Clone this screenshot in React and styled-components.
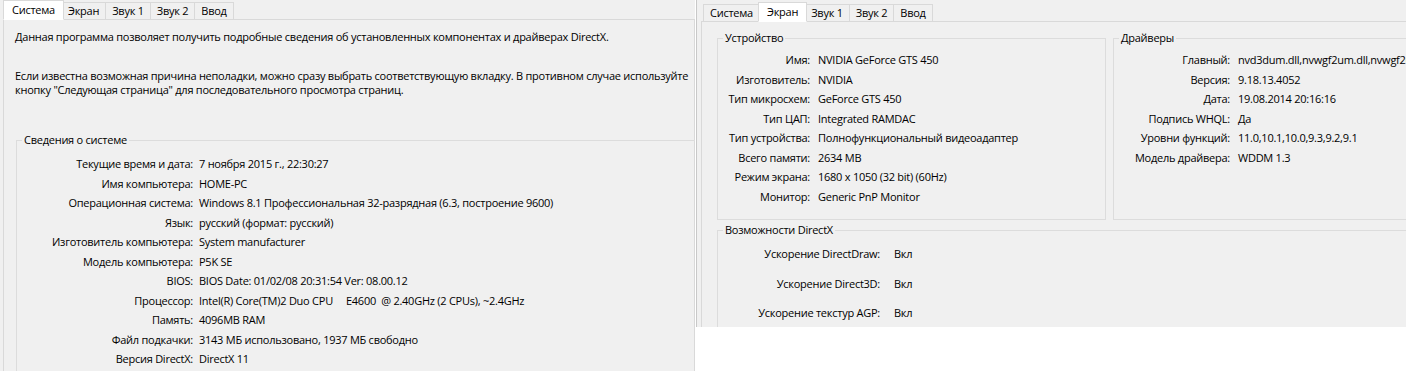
import React from "react";
import styled, { createGlobalStyle } from "styled-components";

const GlobalStyle = createGlobalStyle`
  html, body {
    margin: 0;
    padding: 0;
    background: #ffffff;
  }
  body {
    font-family: "Open Sans", "Noto Sans", sans-serif;
    font-size: 11px;
    letter-spacing: -0.25px;
    color: #000;
  }
`;

const systemRows = [
  ["Текущие время и дата", "7 ноября 2015 г., 22:30:27"],
  ["Имя компьютера", "HOME-PC"],
  ["Операционная система", "Windows 8.1 Профессиональная 32-разрядная (6.3, построение 9600)"],
  ["Язык", "русский (формат: русский)"],
  ["Изготовитель компьютера", "System manufacturer"],
  ["Модель компьютера", "P5K SE"],
  ["BIOS", "BIOS Date: 01/02/08 20:31:54 Ver: 08.00.12"],
  ["Процессор", "Intel(R) Core(TM)2 Duo CPU     E4600  @ 2.40GHz (2 CPUs), ~2.4GHz"],
  ["Память", "4096MB RAM"],
  ["Файл подкачки", "3143 МБ использовано, 1937 МБ свободно"],
  ["Версия DirectX", "DirectX 11"],
];

const deviceRows = [
  ["Имя", "NVIDIA GeForce GTS 450"],
  ["Изготовитель", "NVIDIA"],
  ["Тип микросхем", "GeForce GTS 450"],
  ["Тип ЦАП", "Integrated RAMDAC"],
  ["Тип устройства", "Полнофункциональный видеоадаптер"],
  ["Всего памяти", "2634 MB"],
  ["Режим экрана", "1680 x 1050 (32 bit) (60Hz)"],
  ["Монитор", "Generic PnP Monitor"],
];

const driverRows = [
  ["Главный", "nvd3dum.dll,nvwgf2um.dll,nvwgf2um.dll"],
  ["Версия", "9.18.13.4052"],
  ["Дата", "19.08.2014 20:16:16"],
  ["Подпись WHQL", "Да"],
  ["Уровни функций", "11.0,10.1,10.0,9.3,9.2,9.1"],
  ["Модель драйвера", "WDDM 1.3"],
];

const featureRows = [
  ["Ускорение DirectDraw", "Вкл"],
  ["Ускорение Direct3D", "Вкл"],
  ["Ускорение текстур AGP", "Вкл"],
];

const tabs = ["Система", "Экран", "Звук 1", "Звук 2", "Ввод"];

function TabBar({ active, height, inset }) {
  return (
    <TabStrip $h={height} $inset={inset}>
      {tabs.map((t) => (
        <Tab key={t} $active={t === active}>
          {t}
        </Tab>
      ))}
    </TabStrip>
  );
}

function InfoGrid({ rows, labelWidth, pitch, gap, top }) {
  return (
    <Grid $labelWidth={labelWidth} $pitch={pitch} $gap={gap} $top={top}>
      {rows.map(([k, v]) => (
        <React.Fragment key={k}>
          <Label>{k}:</Label>
          <Value>{v}</Value>
        </React.Fragment>
      ))}
    </Grid>
  );
}

export default function App() {
  return (
    <>
      <GlobalStyle />
      <Screen>
        <Dialog $w={695} $h={371}>
          <TabBar active="Система" height={20} inset={2} />
          <Page>
            <Intro>
              Данная программа позволяет получить подробные сведения об установленных компонентах и драйверах DirectX.
            </Intro>
            <Intro $top={25}>
              Если известна возможная причина неполадки, можно сразу выбрать соответствующую вкладку. В противном случае используйте
              <br />
              кнопку "Следующая страница" для последовательного просмотра страниц.
            </Intro>
            <Group $left={12} $top={36} $width={720} $height={280}>
              <Legend>Сведения о системе</Legend>
              <InfoGrid rows={systemRows} labelWidth={176} pitch={19.5} gap={6} top={3} />
            </Group>
          </Page>
        </Dialog>

        <Dialog $w={711} $h={327} $frame>
          <TabBar active="Экран" height={22} inset={3} />
          <Page>
            <GroupRow>
              <Group $left={15} $top={9} $width={389} $height={189}>
                <Legend>Устройство</Legend>
                <InfoGrid rows={deviceRows} labelWidth={92} pitch={19.5} gap={8} top={1} />
              </Group>
              <Group $left={7} $top={9} $width={320} $height={189}>
                <Legend>Драйверы</Legend>
                <InfoGrid rows={driverRows} labelWidth={116} pitch={19.5} gap={8} top={1} />
              </Group>
            </GroupRow>
            <Group $left={15} $top={3} $width={720} $height={160}>
              <Legend>Возможности DirectX</Legend>
              <InfoGrid rows={featureRows} labelWidth={162} pitch={29.5} gap={14} top={-2} />
            </Group>
          </Page>
        </Dialog>
      </Screen>
    </>
  );
}

const Screen = styled.div`
  display: flex;
  align-items: flex-start;
  width: 1406px;
  height: 371px;
  overflow: hidden;
`;

const Dialog = styled.div`
  flex: none;
  box-sizing: border-box;
  width: ${(p) => p.$w}px;
  height: ${(p) => p.$h}px;
  background: #f0f0f0;
  display: flex;
  flex-direction: column;
  padding-left: ${(p) => (p.$frame ? 4 : 3)}px;
  border-left: ${(p) => (p.$frame ? "1px solid #c8c8c8" : "none")};
  margin-left: ${(p) => (p.$frame ? 1 : 0)}px;
  overflow: hidden;
`;

const TabStrip = styled.div`
  flex: none;
  display: flex;
  align-items: flex-end;
  height: ${(p) => p.$h}px;
  padding-left: ${(p) => p.$inset}px;
  margin-bottom: -1px;
  position: relative;
  z-index: 1;
`;

const Tab = styled.div`
  box-sizing: border-box;
  height: ${(p) => (p.$active ? 20 : 18)}px;
  line-height: ${(p) => (p.$active ? 17 : 16)}px;
  padding: 0 ${(p) => (p.$active ? 8 : 6)}px;
  margin-right: ${(p) => (p.$active ? -2 : 0)}px;
  margin-left: ${(p) => (p.$active ? -2 : -1)}px;
  border: 1px solid #d9d9d9;
  border-bottom-color: ${(p) => (p.$active ? "#ffffff" : "#d9d9d9")};
  background: ${(p) => (p.$active ? "#ffffff" : "#f0f0f0")};
  position: relative;
  z-index: ${(p) => (p.$active ? 2 : 1)};
  white-space: nowrap;
`;

const Page = styled.div`
  flex: none;
  height: 400px;
  border: 1px solid #d9d9d9;
  border-bottom: none;
  background: #f0f0f0;
  display: flex;
  flex-direction: column;
`;

const Intro = styled.p`
  margin: ${(p) => p.$top || 10}px 0 0 11px;
  line-height: 14px;
  white-space: nowrap;
`;

const GroupRow = styled.div`
  display: flex;
`;

const Group = styled.fieldset`
  flex: none;
  box-sizing: border-box;
  margin: ${(p) => p.$top}px 0 0 ${(p) => p.$left}px;
  padding: 4px 0 0 0;
  width: ${(p) => p.$width}px;
  height: ${(p) => p.$height}px;
  border: 1px solid #dcdcdc;
  min-width: 0;
`;

const Legend = styled.legend`
  padding: 0 2px;
  margin-left: 5px;
  line-height: 14px;
`;

const Grid = styled.div`
  display: grid;
  grid-template-columns: ${(p) => p.$labelWidth}px 1fr;
  column-gap: ${(p) => p.$gap}px;
  grid-auto-rows: ${(p) => p.$pitch}px;
  align-items: center;
  margin-top: ${(p) => p.$top}px;
`;

const Label = styled.div`
  text-align: right;
  white-space: nowrap;
`;

const Value = styled.div`
  white-space: pre;
`;
